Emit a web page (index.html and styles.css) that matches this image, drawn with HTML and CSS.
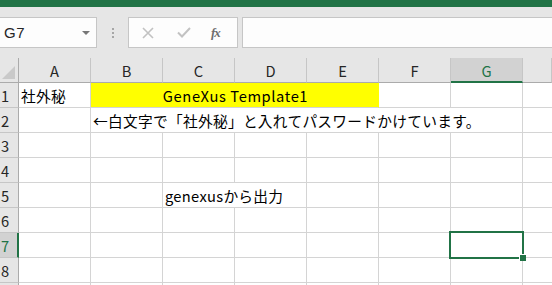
FILE: index.html
```html
<!DOCTYPE html>
<html>
<head>
    <title>Book1</title>
    <link rel="stylesheet" href="styles.css">
</head>
<body>
    <div class="titlebar"></div>

    <div class="formula-row">
        <div class="namebox">
            <span class="namebox-value">G7</span>
            <span class="namebox-arrow"></span>
        </div>
        <div class="grip"><i></i><i></i><i></i></div>
        <div class="fx-buttons">
            <svg class="fx-icon" width="12" height="12" viewBox="0 0 12 12">
                <path d="M1 1 L11 11 M11 1 L1 11" stroke="#c2c2c2" stroke-width="1.6" fill="none" />
            </svg>
            <svg class="fx-icon" width="14" height="11" viewBox="0 0 14 11">
                <path d="M1 5.5 L5 9.5 L13 1" stroke="#c2c2c2" stroke-width="2" fill="none" />
            </svg>
            <span class="fx-label">fx</span>
        </div>
        <div class="formula-input"></div>
    </div>

    <div class="sheet">
        <div class="hdr corner">
            <svg width="13" height="13" viewBox="0 0 13 13">
                <polygon points="13,0 13,13 0,13" fill="#c9c9c9" />
            </svg>
        </div>
        <div class="hdr col">A</div>
        <div class="hdr col">B</div>
        <div class="hdr col">C</div>
        <div class="hdr col">D</div>
        <div class="hdr col">E</div>
        <div class="hdr col">F</div>
        <div class="hdr col active">G</div>
        <div class="hdr col last"></div>

        <!-- row 1 -->
        <div class="hdr row">1</div>
        <div class="cell">社外秘</div>
        <div class="cell merged">GeneXus Template1</div>
        <div class="cell"></div>
        <div class="cell"></div>
        <div class="cell last"></div>

        <!-- row 2 -->
        <div class="hdr row">2</div>
        <div class="cell"></div>
        <div class="cell span6">←白文字で「社外秘」と入れてパスワードかけています。</div>
        <div class="cell last"></div>

        <!-- row 3 -->
        <div class="hdr row">3</div>
        <div class="cell"></div><div class="cell"></div><div class="cell"></div><div class="cell"></div>
        <div class="cell"></div><div class="cell"></div><div class="cell"></div><div class="cell last"></div>

        <!-- row 4 -->
        <div class="hdr row">4</div>
        <div class="cell"></div><div class="cell"></div><div class="cell"></div><div class="cell"></div>
        <div class="cell"></div><div class="cell"></div><div class="cell"></div><div class="cell last"></div>

        <!-- row 5 -->
        <div class="hdr row">5</div>
        <div class="cell"></div>
        <div class="cell"></div>
        <div class="cell span2">genexusから出力</div>
        <div class="cell"></div><div class="cell"></div><div class="cell"></div><div class="cell last"></div>

        <!-- row 6 -->
        <div class="hdr row">6</div>
        <div class="cell"></div><div class="cell"></div><div class="cell"></div><div class="cell"></div>
        <div class="cell"></div><div class="cell"></div><div class="cell"></div><div class="cell last"></div>

        <!-- row 7 -->
        <div class="hdr row active">7</div>
        <div class="cell"></div><div class="cell"></div><div class="cell"></div><div class="cell"></div>
        <div class="cell"></div><div class="cell"></div><div class="cell"></div><div class="cell last"></div>

        <!-- row 8 -->
        <div class="hdr row">8</div>
        <div class="cell"></div><div class="cell"></div><div class="cell"></div><div class="cell"></div>
        <div class="cell"></div><div class="cell"></div><div class="cell"></div><div class="cell last"></div>

        <!-- row 9, only its top edge shows -->
        <div class="hdr row"></div>
        <div class="cell"></div><div class="cell"></div><div class="cell"></div><div class="cell"></div>
        <div class="cell"></div><div class="cell"></div><div class="cell"></div><div class="cell last"></div>

        <div class="selection"><span class="fill-handle"></span></div>
    </div>
</body>
</html>
```

FILE: styles.css
```css
html, body {
    margin: 0;
    padding: 0;
    overflow: hidden;
}

body {
    width: 552px;
    height: 285px;
    background-color: #E6E6E6;
    font-family: "Noto Sans CJK JP", "Liberation Sans", sans-serif;
    color: #000000;
}

.titlebar {
    height: 7px;
    background-color: #217346;
}

/* formula bar */
.formula-row {
    display: flex;
    align-items: center;
    height: 31px;
    padding: 10px 0;
}

.namebox {
    display: flex;
    align-items: center;
    justify-content: space-between;
    box-sizing: border-box;
    width: 98px;
    height: 31px;
    margin-left: -1px;
    padding: 0 6px 0 4px;
    background-color: #FDFDFD;
    border: 1px solid #C6C6C6;
}

.namebox-value {
    font-family: "Liberation Sans", sans-serif;
    font-size: 15px;
    color: #262626;
    letter-spacing: 0.5px;
}

.namebox-arrow {
    width: 0;
    height: 0;
    border-left: 4px solid transparent;
    border-right: 4px solid transparent;
    border-top: 4px solid #777777;
}

.grip {
    display: flex;
    flex-direction: column;
    gap: 2px;
    width: 2px;
    margin: 0 14px 0 15px;
}

.grip i {
    display: block;
    width: 2px;
    height: 2px;
    background-color: #A6A6A6;
}

.fx-buttons {
    display: flex;
    align-items: center;
    box-sizing: border-box;
    width: 110px;
    height: 31px;
    background-color: #FDFDFD;
    border: 1px solid #C6C6C6;
}

.fx-icon:first-child {
    margin-left: 13px;
}

.fx-icon + .fx-icon {
    margin-left: 23px;
}

.fx-label {
    margin-left: 20px;
    font-family: "Liberation Serif", serif;
    font-style: italic;
    font-weight: bold;
    font-size: 13px;
    color: #6E6E6E;
    letter-spacing: -1px;
}

.formula-input {
    flex: 1;
    box-sizing: border-box;
    height: 31px;
    margin-left: 4px;
    margin-right: -2px;
    background-color: #FDFDFD;
    border: 1px solid #C6C6C6;
}

/* grid */
.sheet {
    position: relative;
    display: grid;
    grid-template-columns: 19px repeat(7, 72px) 1fr;
    grid-template-rows: 25px;
    grid-auto-rows: 25px;
    background-color: #FFFFFF;
    font-size: 14.7px;
}

.hdr {
    box-sizing: border-box;
    display: flex;
    align-items: center;
    background-color: #E6E6E6;
    color: #262626;
}

.hdr.corner {
    align-items: flex-end;
    justify-content: flex-end;
    padding: 0 3px 3px 0;
    border-right: 1px solid #ABABAB;
    border-bottom: 1px solid #ABABAB;
}

.hdr.col {
    justify-content: center;
    border-right: 1px solid #C6C6C6;
    border-bottom: 1px solid #ABABAB;
    padding-top: 1px;
}

.hdr.col.active {
    background-color: #D2D2D2;
    color: #217346;
    border-bottom: 2px solid #217346;
    padding-top: 2px;
}

.hdr.row {
    padding-left: 1px;
    border-right: 1px solid #ABABAB;
    border-bottom: 1px solid #C6C6C6;
}

.hdr.row.active {
    background-color: #D2D2D2;
    color: #217346;
    border-right: 2px solid #217346;
}

.cell {
    box-sizing: border-box;
    display: flex;
    align-items: center;
    padding: 1px 0 0 2px;
    white-space: nowrap;
    letter-spacing: 0.3px;
    border-right: 1px solid #D4D4D4;
    border-bottom: 1px solid #D4D4D4;
}

.cell.last {
    border-right: none;
}

.cell.merged {
    grid-column: span 4;
    justify-content: center;
    letter-spacing: 0.6px;
    background-color: #FFFF00;
    border-right-color: #FFFF00;
    border-bottom-color: #D4D4D4;
}

.cell.span6 {
    grid-column: span 6;
}

.cell.span2 {
    grid-column: span 2;
}

/* active cell G7 */
.selection {
    position: absolute;
    left: 449px;
    top: 173px;
    box-sizing: border-box;
    width: 75px;
    height: 28px;
    border: 2px solid #217346;
}

.fill-handle {
    position: absolute;
    right: -4px;
    bottom: -4px;
    width: 6px;
    height: 6px;
    background-color: #217346;
    border-left: 1px solid #FFFFFF;
    border-top: 1px solid #FFFFFF;
}
```
